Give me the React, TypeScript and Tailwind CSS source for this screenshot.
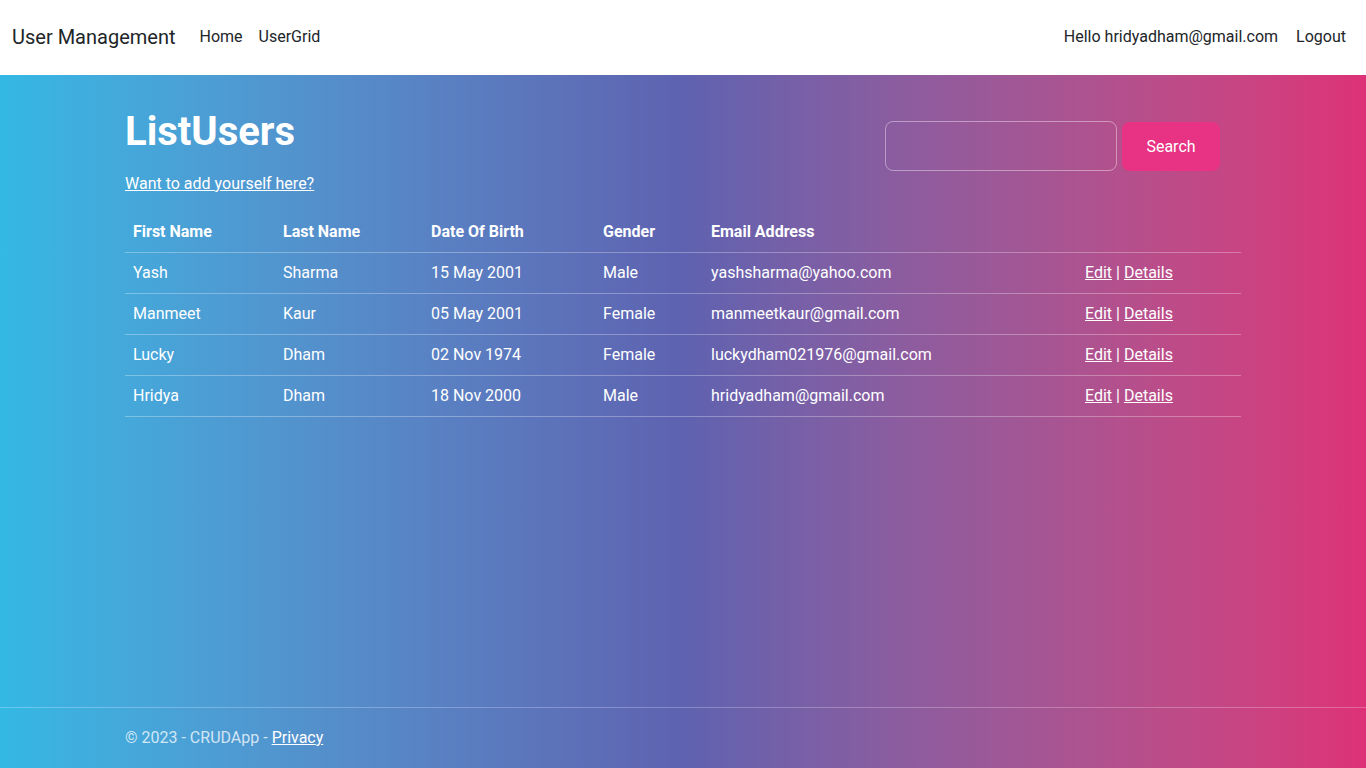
import React from "react";

const users = [
  { first: "Yash", last: "Sharma", dob: "15 May 2001", gender: "Male", email: "yashsharma@yahoo.com" },
  { first: "Manmeet", last: "Kaur", dob: "05 May 2001", gender: "Female", email: "manmeetkaur@gmail.com" },
  { first: "Lucky", last: "Dham", dob: "02 Nov 1974", gender: "Female", email: "luckydham021976@gmail.com" },
  { first: "Hridya", last: "Dham", dob: "18 Nov 2000", gender: "Male", email: "hridyadham@gmail.com" },
];

export default function App() {
  return (
    <div className="min-h-screen flex flex-col font-['Roboto',sans-serif] text-base">
      <nav className="h-[75px] bg-white flex items-center justify-between px-3 pb-[2px] shrink-0">
        <div className="flex items-center">
          <span className="text-[20px] text-[#212529] mr-4">User Management</span>
          <a className="px-2 text-[#212529]">Home</a>
          <a className="px-2 text-[#212529]">UserGrid</a>
        </div>
        <div className="flex items-center">
          <span className="pl-2 pr-[10px] text-[#212529]">Hello hridyadham@gmail.com</span>
          <a className="px-2 text-[#212529]">Logout</a>
        </div>
      </nav>
      <main className="flex-1 flex flex-col bg-gradient-to-r from-[#33b8e4] via-[#5e62b0] to-[#dd3177] text-white">
        <div className="flex-1 w-[1116px] mx-auto pt-[33px]">
          <div className="flex justify-between">
            <div>
              <h1 className="text-[40px] font-bold leading-[48px]">ListUsers</h1>
              <p className="mt-4 leading-6">
                <a className="underline">Want to add yourself here?</a>
              </p>
            </div>
            <div className="flex items-start mt-[13px] mr-[21px]">
              <input className="w-[232px] h-[50px] rounded-lg border border-white/40 bg-transparent outline-none px-3" />
              <button className="ml-[5px] mt-px w-[98px] h-[49px] rounded-lg bg-[#e83283] text-white">Search</button>
            </div>
          </div>
          <table className="mt-[15px] w-full border-collapse table-fixed">
            <colgroup>
              <col className="w-[150px]" />
              <col className="w-[148px]" />
              <col className="w-[172px]" />
              <col className="w-[108px]" />
              <col className="w-[374px]" />
              <col />
            </colgroup>
            <thead>
              <tr className="border-b border-white/30 h-[41px]">
                <th className="text-left px-2 pt-[2px] font-bold">First Name</th>
                <th className="text-left px-2 pt-[2px] font-bold">Last Name</th>
                <th className="text-left px-2 pt-[2px] font-bold">Date Of Birth</th>
                <th className="text-left px-2 pt-[2px] font-bold">Gender</th>
                <th className="text-left px-2 pt-[2px] font-bold">Email Address</th>
                <th></th>
              </tr>
            </thead>
            <tbody>
              {users.map((u) => (
                <tr key={u.email} className="border-b border-white/30 h-[41px]">
                  <td className="px-2">{u.first}</td>
                  <td className="px-2">{u.last}</td>
                  <td className="px-2">{u.dob}</td>
                  <td className="px-2">{u.gender}</td>
                  <td className="px-2">{u.email}</td>
                  <td className="px-2">
                    <a className="underline">Edit</a> | <a className="underline">Details</a>
                  </td>
                </tr>
              ))}
            </tbody>
          </table>
        </div>
        <footer className="border-t border-white/25 h-[61px] flex items-center shrink-0">
          <div className="w-[1116px] mx-auto text-white/75">
            © 2023 - CRUDApp - <a className="underline text-white">Privacy</a>
          </div>
        </footer>
      </main>
    </div>
  );
}
